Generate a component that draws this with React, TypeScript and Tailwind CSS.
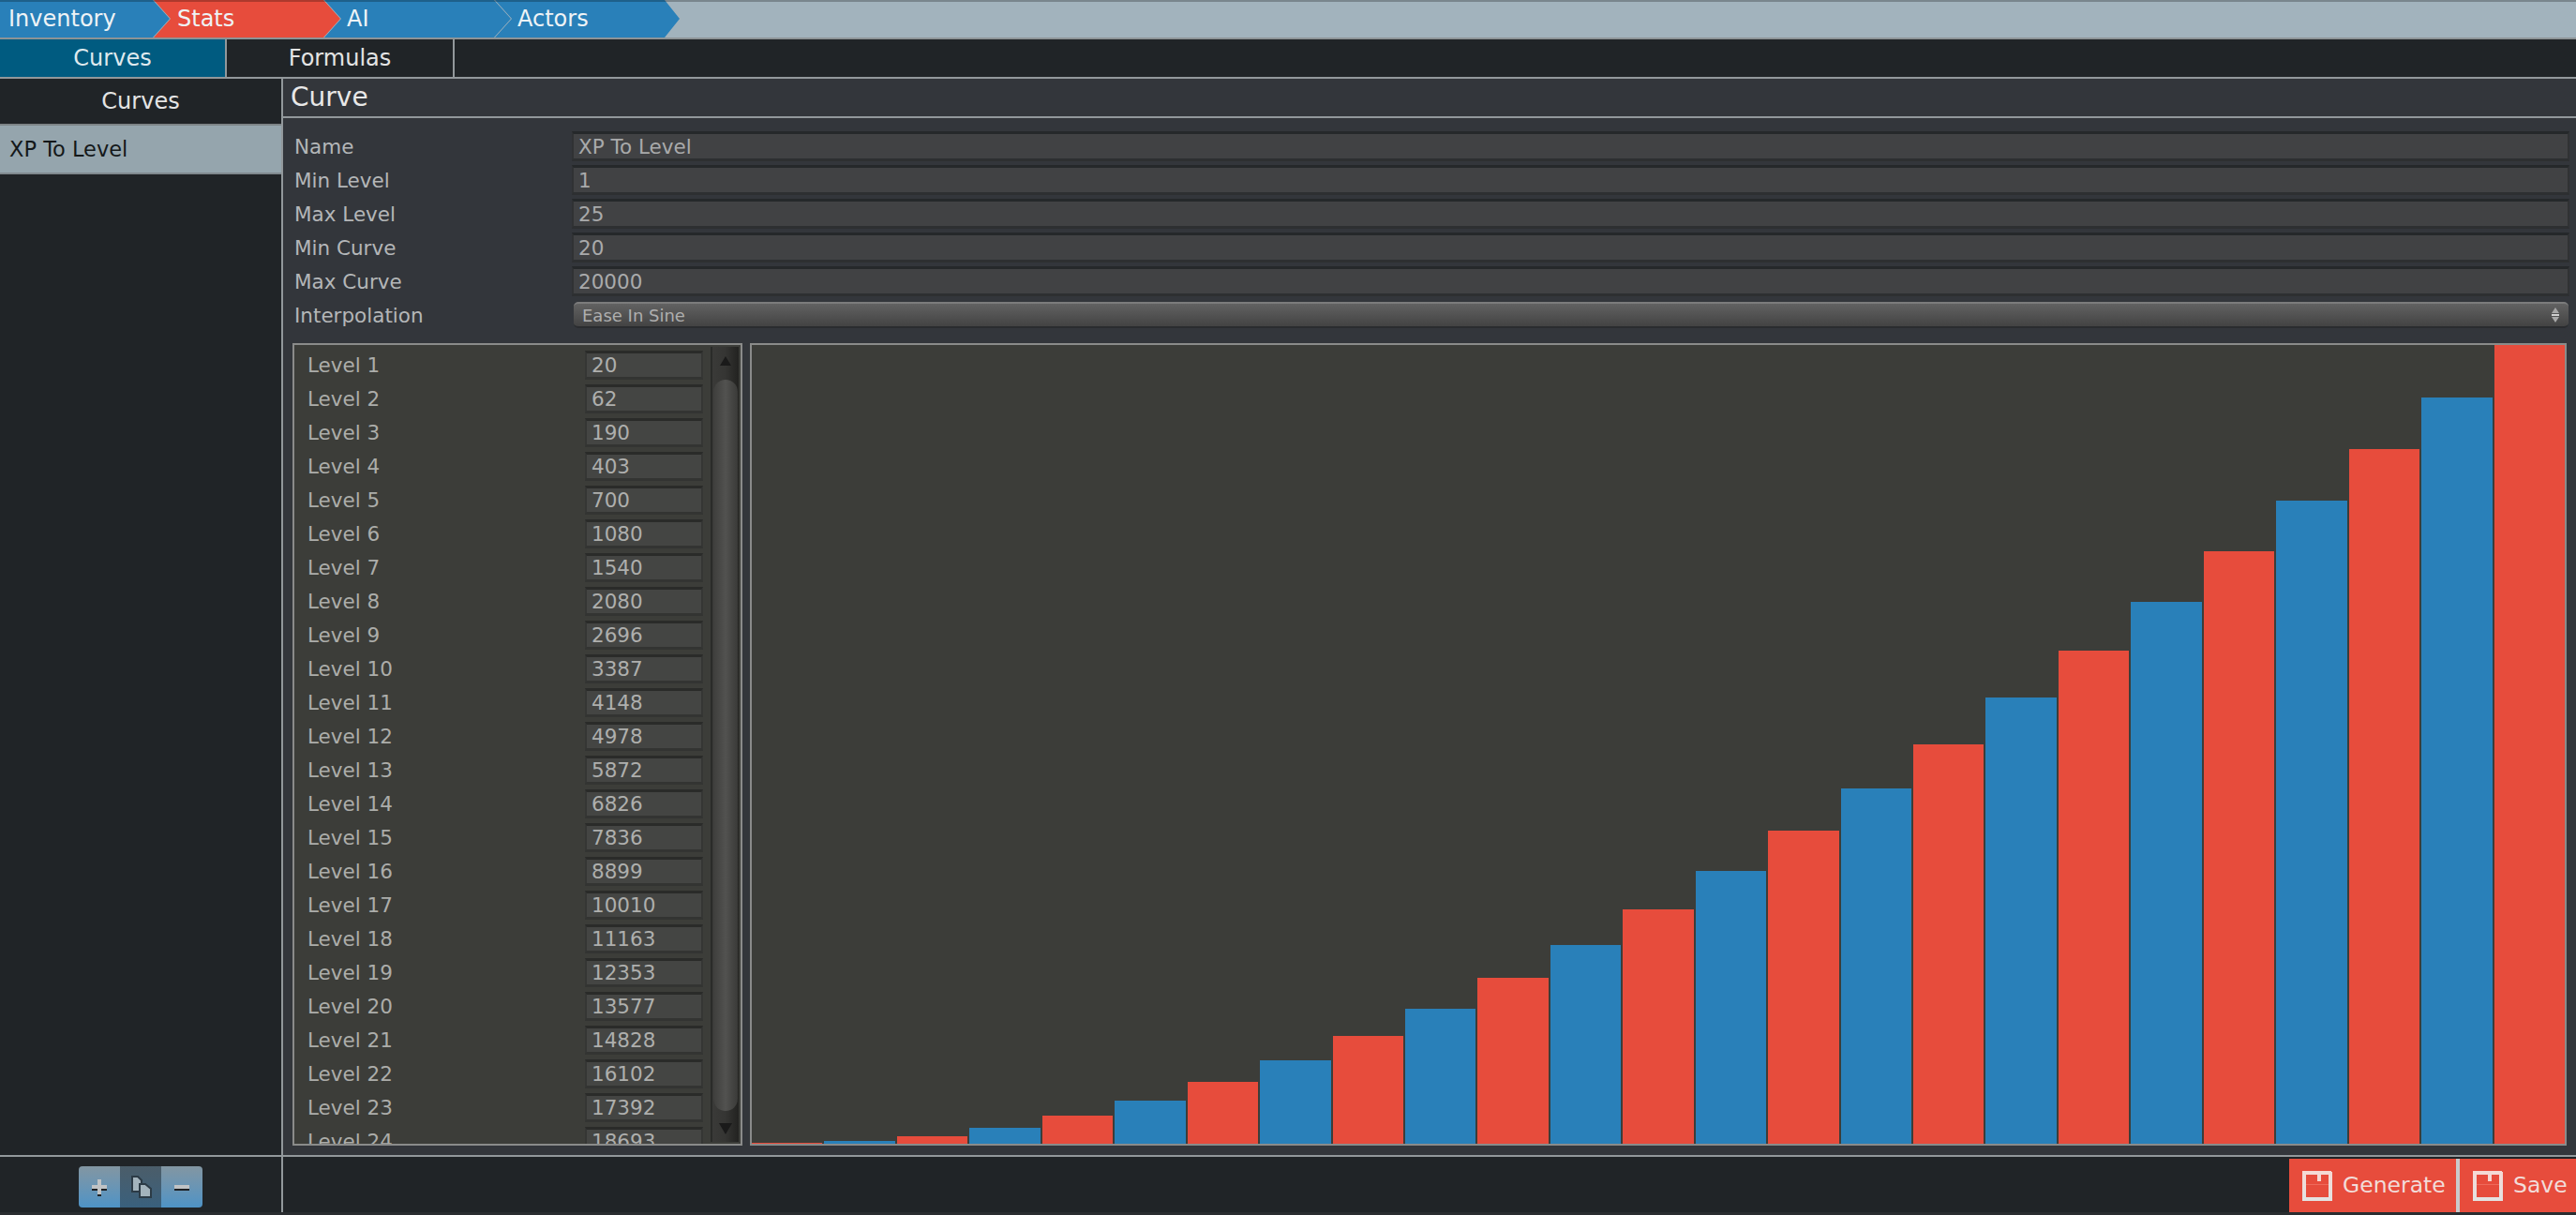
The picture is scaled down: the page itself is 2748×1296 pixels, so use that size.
const font = { fontFamily: '"DejaVu Sans", sans-serif' };

const crumbs = [
  { label: "Inventory", bg: "bg-[#2980b9]", cls: "w-[181px] pl-[9px] [clip-path:polygon(0_0,163px_0,181px_20px,163px_100%,0_100%)] z-40" },
  { label: "Stats", bg: "bg-[#e74c3c]", cls: "w-[200px] pl-[26px] -ml-[18px] [clip-path:polygon(1px_0,182px_0,200px_20px,182px_100%,1px_100%,19px_20px)] z-30" },
  { label: "AI", bg: "bg-[#2980b9]", cls: "w-[200px] pl-[25px] -ml-[18px] [clip-path:polygon(1px_0,182px_0,200px_20px,182px_100%,1px_100%,19px_20px)] z-20" },
  { label: "Actors", bg: "bg-[#2980b9]", cls: "w-[198px] pl-[25px] -ml-[18px] [clip-path:polygon(1px_0,182px_0,198px_20px,182px_100%,1px_100%,19px_20px)] z-10" },
];

const fields = [
  ["Name", "XP To Level"],
  ["Min Level", "1"],
  ["Max Level", "25"],
  ["Min Curve", "20"],
  ["Max Curve", "20000"],
];

const values = [20, 62, 190, 403, 700, 1080, 1540, 2080, 2696, 3387, 4148, 4978, 5872, 6826, 7836, 8899, 10010, 11163, 12353, 13577, 14828, 16102, 17392, 18693, 20000];

function SaveIcon({ id }: { id: string }) {
  return (
    <svg width="32" height="32" viewBox="0 0 32 32" className="shrink-0" shapeRendering="crispEdges">
      <defs>
        <linearGradient id={id} x1="0" y1="0" x2="0" y2="1">
          <stop offset="0" stopColor="#f6d9d4" />
          <stop offset="1" stopColor="#e2e2e2" />
        </linearGradient>
      </defs>
      <path d="M0 0H30L32 2V32H0Z M4 4V28H28V4Z" fillRule="evenodd" fill={`url(#${id})`} />
      <rect x="16" y="4" width="4" height="7" fill="#f4d8d3" />
      <rect x="4" y="14" width="24" height="1" fill="#ee6a5b" />
    </svg>
  );
}

export default function App() {
  return (
    <div style={font} className="h-[1296px] w-[2748px] overflow-hidden flex flex-col bg-[#202427] text-[#e8e8e8]">
      {/* Breadcrumb bar */}
      <div className="relative h-[42px] shrink-0 bg-[#a2b3bd] border-b-2 border-[#8d9396] flex">
        <div className="absolute inset-x-0 top-0 h-[2px] bg-[#000]/25 z-50" />
        {crumbs.map((c) => (
          <div key={c.label} className={`relative h-[40px] flex items-center text-[24px] leading-none text-[#eef3f6] ${c.bg} ${c.cls}`}>
            {c.label}
          </div>
        ))}
      </div>

      {/* Tabs */}
      <div className="h-[42px] shrink-0 flex border-b-2 border-[#92989b] bg-[#202427] text-[24px]">
        <div className="w-[242px] border-r-2 border-[#92989b] bg-[#005b80] flex items-center justify-center text-[#dfe9ee]">Curves</div>
        <div className="w-[243px] border-r-2 border-[#92989b] flex items-center justify-center text-[#e4e4e4]">Formulas</div>
      </div>

      {/* Body */}
      <div className="flex-1 min-h-0 flex">
        <div className="w-[302px] shrink-0 border-r-2 border-[#92989b] flex flex-col">
          <div className="h-[50px] flex items-center justify-center text-[24px] text-[#e4e4e4] border-b-2 border-[#7d8487]">Curves</div>
          <div className="h-[52px] flex items-center pl-[10px] pt-[2px] bg-[#95a5ad] border-b-2 border-[#80898e] text-[22.5px] text-[#14181a]">XP To Level</div>
        </div>

        <div className="flex-1 min-w-0 flex flex-col bg-[#33363b]">
          <div className="h-[42px] shrink-0 border-b-2 border-[#92989b] flex items-center pl-[8px] text-[28px] leading-none text-[#e8e8e8]">Curve</div>

          <div className="pt-[14px] pr-[7px] pl-[12px] flex flex-col gap-[4px] text-[21.5px]">
            {fields.map(([k, v]) => (
              <div key={k} className="flex items-center h-[32px]">
                <div className="w-[296px] shrink-0 pt-[2px] text-[#b4b6b8]">{k}</div>
                <div className="flex-1 h-[32px] flex items-center pl-[5px] pt-[2px] bg-[#414244] border-t-[3px] border-x-[2px] border-b-[3px] border-t-[#25282a] border-x-[#303234] border-b-[#2d2f31] text-[#a9aaab]">{v}</div>
              </div>
            ))}
            <div className="flex items-center h-[28px] mt-[2px]">
              <div className="w-[298px] shrink-0 pt-[2px] text-[#b4b6b8]">Interpolation</div>
              <div className="flex-1 h-[28px] mr-[1px] flex items-center justify-between pl-[9px] pr-[9px] rounded-[5px] border-t-2 border-[#7c7c7c] border-b-2 border-b-[#2a2c2f] bg-gradient-to-b from-[#626262] to-[#434343] text-[18px] text-[#aeaeae]">
                <span className="pt-[1px]">Ease In Sine</span>
                <svg width="10" height="16" viewBox="0 0 10 16">
                  <path d="M5 0L9 6H1Z" fill="#a8a8a8" />
                  <path d="M5 16L9 10H1Z" fill="#a8a8a8" />
                  <rect x="1" y="7" width="8" height="2" fill="#d0d0d0" />
                </svg>
              </div>
            </div>
          </div>

          <div className="flex-1 min-h-0 flex gap-[8px] pt-[16px] pb-[10px] pl-[10px] pr-[10px]">
            {/* Level list */}
            <div className="w-[480px] shrink-0 relative border-2 border-[#8a8b8a] bg-[#3c3d39] overflow-hidden flex">
              <div className="w-[444px] overflow-hidden pt-[6px] flex flex-col gap-[5px] text-[21.5px]">
                {values.map((v, i) => (
                  <div key={i} className="flex items-center h-[31px] shrink-0">
                    <div className="w-[310px] shrink-0 pl-[14px] pt-[2px] text-[#acadaa]">Level {i + 1}</div>
                    <div className="w-[126px] h-[31px] flex items-center pl-[5px] pt-[2px] bg-[#444543] border-t-[3px] border-x-[2px] border-b-[3px] border-t-[#2a2b29] border-x-[#353634] border-b-[#333432] text-[#aeafad]">{v}</div>
                  </div>
                ))}
              </div>
              <div className="w-[30px] my-[2px] flex flex-col items-center border-l-2 border-[#2a2b29] bg-gradient-to-r from-[#3a3a38] via-[#353533] to-[#222220]">
                <svg width="14" height="10" viewBox="0 0 14 10" className="mt-[10px] shrink-0">
                  <path d="M7 0L13 10H1Z" fill="#1a1a1a" />
                </svg>
                <div className="mt-[15px] w-[26px] h-[780px] shrink-0 rounded-[13px] bg-gradient-to-r from-[#3e3e3c] via-[#525250] to-[#3a3a38]" />
                <svg width="14" height="12" viewBox="0 0 14 12" className="mt-[13px] shrink-0">
                  <path d="M7 12L14 0H0Z" fill="#1a1a1a" />
                </svg>
              </div>
            </div>

            {/* Chart */}
            <div className="flex-1 min-w-0 border-2 border-[#8a8b8a] bg-[#3c3d39] flex items-end gap-[2px]">
              {values.map((v, i) => (
                <div
                  key={i}
                  className={`flex-1 ${i % 2 === 0 ? "bg-[#e74c3c]" : "bg-[#2980b9]"}`}
                  style={{ height: `${(v / 20000) * 100}%` }}
                />
              ))}
            </div>
          </div>
        </div>
      </div>

      {/* Footer */}
      <div className="h-[64px] shrink-0 flex border-t-2 border-[#92989b] bg-[#202427] border-b-[3px] border-b-[#2a2d30]">
        <div className="w-[302px] shrink-0 border-r-2 border-[#92989b] flex items-start pl-[84px] pt-[10px]">
          <div className="flex h-[44px] rounded-[4px] overflow-hidden">
            <div className="w-[44px] flex items-center justify-center bg-gradient-to-b from-[#8296a2] to-[#4d93c6]">
              <svg width="16" height="18" viewBox="0 0 16 18" shapeRendering="crispEdges" className="mt-[1px]">
                <rect x="6" y="0" width="4" height="16" fill="#c0c3c5" />
                <rect x="0" y="6" width="16" height="4" fill="#c0c3c5" />
                <rect x="0" y="10" width="6" height="2" fill="#1c1f22" />
                <rect x="10" y="10" width="6" height="2" fill="#1c1f22" />
                <rect x="6" y="16" width="4" height="2" fill="#1c1f22" />
              </svg>
            </div>
            <div className="w-[44px] flex items-center justify-center bg-gradient-to-b from-[#4b5d69] to-[#39607d]">
              <svg width="22" height="24" viewBox="0 0 22 24" className="ml-[2px]">
                <path d="M1 1H7L11 5V17H1Z" fill="#a3b3bc" stroke="#2c3b46" strokeWidth="2" />
                <path d="M9 9H15L21 14V23H9Z" fill="#a3b3bc" stroke="#2c3b46" strokeWidth="2" />
              </svg>
            </div>
            <div className="w-[44px] flex items-center justify-center bg-gradient-to-b from-[#8296a2] to-[#4d93c6]">
              <svg width="16" height="6" viewBox="0 0 16 6" shapeRendering="crispEdges" className="mt-[2px]">
                <rect x="0" y="0" width="16" height="4" fill="#c0c3c5" />
                <rect x="0" y="4" width="16" height="2" fill="#1c1f22" />
              </svg>
            </div>
          </div>
        </div>
        <div className="flex-1 flex justify-end pt-[2px]">
          <div className="w-[178px] border-r-0 bg-[#e74c3c] flex items-center pl-[14px] gap-[11px] text-[23.5px] text-[#f2dcd9]">
            <SaveIcon id="saveA" />
            <span>Generate</span>
          </div>
          <div className="w-[4px] bg-[#c9cbcc]" />
          <div className="w-[124px] bg-[#e74c3c] flex items-center pl-[14px] gap-[11px] text-[23.5px] text-[#f2dcd9]">
            <SaveIcon id="saveB" />
            <span>Save</span>
          </div>
        </div>
      </div>
    </div>
  );
}
